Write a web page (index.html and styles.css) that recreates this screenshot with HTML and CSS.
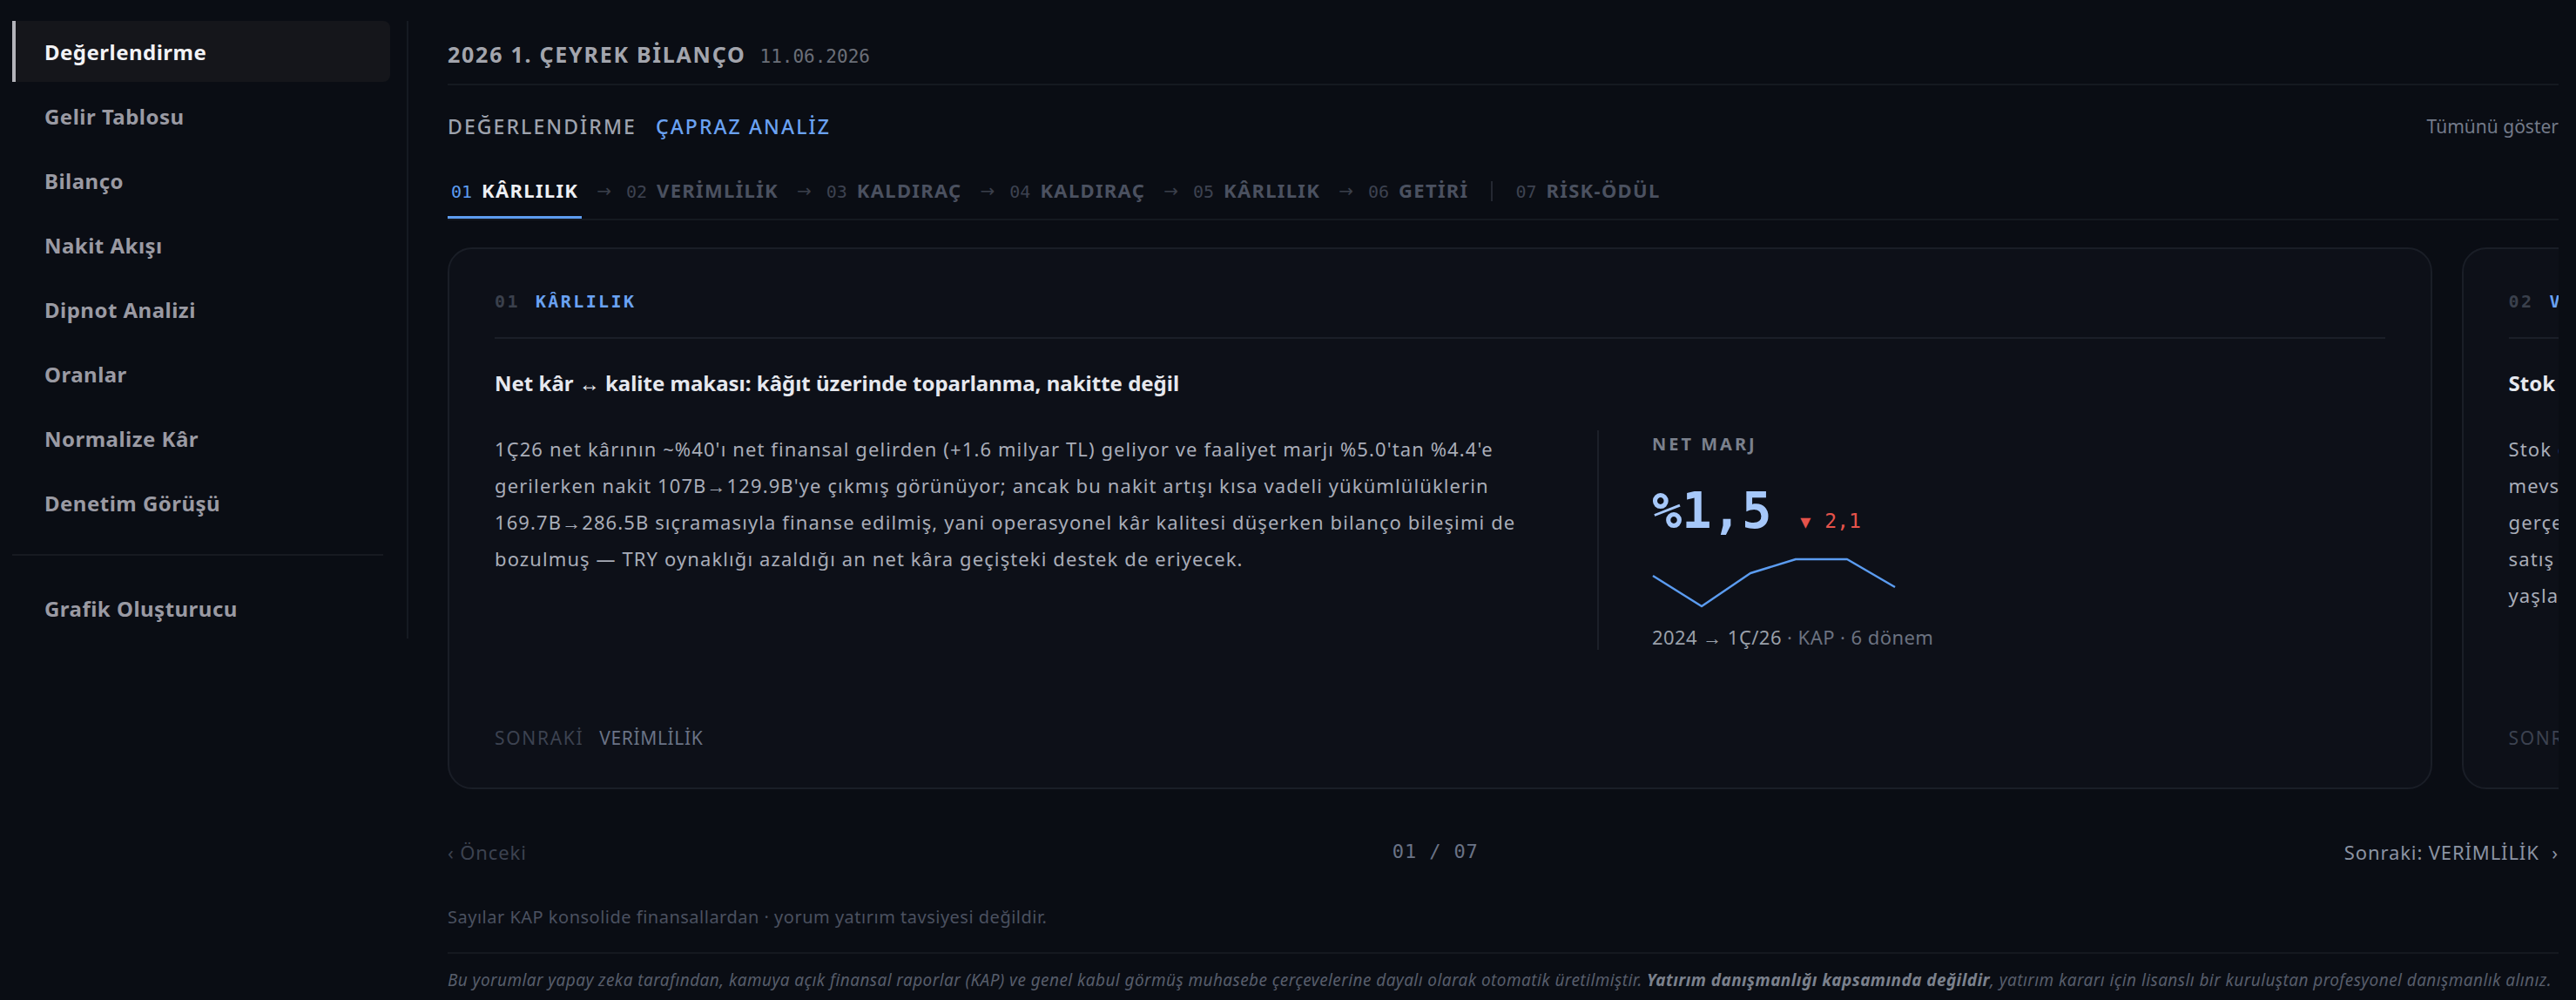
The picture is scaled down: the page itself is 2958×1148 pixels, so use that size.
FILE: index.html
```html
<!DOCTYPE html>
<html lang="tr">
<head>
    <meta charset="UTF-8">
    <meta name="viewport" content="width=device-width, initial-scale=1.0">
    <title>2026 1. Çeyrek Bilanço - Değerlendirme</title>
    <link rel="stylesheet" href="styles.css">
</head>
<body>
    <aside class="sidebar">
        <nav class="side-nav">
            <a class="side-link active" href="#">Değerlendirme</a>
            <a class="side-link" href="#">Gelir Tablosu</a>
            <a class="side-link" href="#">Bilanço</a>
            <a class="side-link" href="#">Nakit Akışı</a>
            <a class="side-link" href="#">Dipnot Analizi</a>
            <a class="side-link" href="#">Oranlar</a>
            <a class="side-link" href="#">Normalize Kâr</a>
            <a class="side-link" href="#">Denetim Görüşü</a>
        </nav>
        <div class="side-divider"></div>
        <a class="side-link" href="#">Grafik Oluşturucu</a>
    </aside>

    <main class="main">
        <header class="report-head">
            <h1>2026 1. ÇEYREK BİLANÇO</h1>
            <span class="report-date">11.06.2026</span>
        </header>

        <div class="section-bar">
            <div class="section-links">
                <a href="#">DEĞERLENDİRME</a>
                <a href="#" class="current">ÇAPRAZ ANALİZ</a>
            </div>
            <a href="#" class="show-all">Tümünü göster</a>
        </div>

        <nav class="steps">
            <a class="step active" href="#"><span class="step-no">01</span>KÂRLILIK</a>
            <span class="step-arrow">→</span>
            <a class="step" href="#"><span class="step-no">02</span>VERİMLİLİK</a>
            <span class="step-arrow">→</span>
            <a class="step" href="#"><span class="step-no">03</span>KALDIRAÇ</a>
            <span class="step-arrow">→</span>
            <a class="step" href="#"><span class="step-no">04</span>KALDIRAÇ</a>
            <span class="step-arrow">→</span>
            <a class="step" href="#"><span class="step-no">05</span>KÂRLILIK</a>
            <span class="step-arrow">→</span>
            <a class="step" href="#"><span class="step-no">06</span>GETİRİ</a>
            <span class="step-sep"></span>
            <a class="step" href="#"><span class="step-no">07</span>RİSK-ÖDÜL</a>
        </nav>

        <div class="cards">
            <article class="card">
                <div class="card-head">
                    <span class="card-no">01</span>
                    <span class="card-topic">KÂRLILIK</span>
                </div>
                <h2 class="card-title">Net kâr ↔ kalite makası: kâğıt üzerinde toparlanma, nakitte değil</h2>
                <div class="card-body">
                    <p class="card-text">1Ç26 net kârının ~%40'ı net finansal gelirden (+1.6 milyar TL) geliyor ve faaliyet marjı %5.0'tan %4.4'e gerilerken nakit 107B→129.9B'ye çıkmış görünüyor; ancak bu nakit artışı kısa vadeli yükümlülüklerin 169.7B→286.5B sıçramasıyla finanse edilmiş, yani operasyonel kâr kalitesi düşerken bilanço bileşimi de bozulmuş — TRY oynaklığı azaldığı an net kâra geçişteki destek de eriyecek.</p>
                    <div class="metric">
                        <div class="metric-label">NET MARJ</div>
                        <div class="metric-value">
                            <span class="metric-big">%1,5</span>
                            <span class="metric-delta down"><span class="tri">▼</span>2,1</span>
                        </div>
                        <svg class="spark" width="282" height="60" viewBox="0 0 282 60">
                            <polyline points="1,22 57,57 113,19 165,3 224,3 279,35" fill="none" stroke="#5b9cf0" stroke-width="2.5" stroke-linejoin="round"/>
                        </svg>
                        <div class="metric-src"><span class="range">2024 → 1Ç/26</span> · KAP · 6 dönem</div>
                    </div>
                </div>
                <div class="card-foot">
                    <span class="foot-label">SONRAKİ</span>
                    <span class="foot-next">VERİMLİLİK</span>
                </div>
            </article>

            <article class="card">
                <div class="card-head">
                    <span class="card-no">02</span>
                    <span class="card-topic">VERİMLİLİK</span>
                </div>
                <h2 class="card-title">Stok şişkinliği ↔ devir hızı: satılamayan mal bilançoda birikiyor</h2>
                <div class="card-body">
                    <p class="card-text">Stok devir süresi 1Ç26'da 96 günden 131 güne uzadı; bunun bir kısmı bayram öncesi geçici alımlarla mevsimsel hazırlıkla açıklanabilir, ancak stok artışı (+%38) satış artışının (+%9) çok üzerinde ve gerçekleşen brüt marj da %31.2'den %28.7'ye gerilemiş. Ticari alacak devir süresi de hızla uzarken bu veri, satış hacmini korumak için vadeyi ve iskontoyu birlikte artırdığını düşündürüyor; stok ve alacakların yaşlandırma tabloları bir sonraki dönem dipnotlarında izlenmeli.</p>
                    <div class="metric">
                        <div class="metric-label">STOK DEVİR</div>
                        <div class="metric-value">
                            <span class="metric-big">131g</span>
                            <span class="metric-delta down"><span class="tri">▲</span>35</span>
                        </div>
                        <svg class="spark" width="282" height="60" viewBox="0 0 282 60">
                            <polyline points="1,48 57,44 113,40 165,33 224,25 279,5" fill="none" stroke="#5b9cf0" stroke-width="2.5" stroke-linejoin="round"/>
                        </svg>
                        <div class="metric-src"><span class="range">2024 → 1Ç/26</span> · KAP · 6 dönem</div>
                    </div>
                </div>
                <div class="card-foot">
                    <span class="foot-label">SONRAKİ</span>
                    <span class="foot-next">KALDIRAÇ</span>
                </div>
            </article>
        </div>

        <div class="pager">
            <a href="#" class="pager-prev">‹ Önceki</a>
            <span class="pager-count">01 / 07</span>
            <a href="#" class="pager-next">Sonraki: VERİMLİLİK <span class="chev">›</span></a>
        </div>

        <p class="note">Sayılar KAP konsolide finansallardan · yorum yatırım tavsiyesi değildir.</p>

        <p class="disclaimer">Bu yorumlar yapay zeka tarafından, kamuya açık finansal raporlar (KAP) ve genel kabul görmüş muhasebe çerçevelerine dayalı olarak otomatik üretilmiştir. <strong>Yatırım danışmanlığı kapsamında değildir</strong>, yatırım kararı için lisanslı bir kuruluştan profesyonel danışmanlık alınız.</p>
    </main>
</body>
</html>
```

FILE: styles.css
```css
body {
    margin: 0;
    display: flex;
    align-items: flex-start;
    min-height: 100vh;
    overflow: hidden;
    background-color: #0a0d14;
    color: #a9adb8;
    font-family: "Noto Sans", sans-serif;
}
a {
    color: inherit;
    text-decoration: none;
}

/* sidebar */
.sidebar {
    flex: 0 0 auto;
    width: 434px;
    margin: 24px 0 0 14px;
    padding-right: 19px;
    border-right: 2px solid #161a22;
}
.side-nav {
    display: flex;
    flex-direction: column;
    gap: 4px;
}
.side-link {
    display: flex;
    align-items: center;
    height: 70px;
    padding-left: 33px;
    border-left: 4px solid transparent;
    border-radius: 0 8px 8px 0;
    font-size: 24px;
    font-weight: 700;
    letter-spacing: 0.02em;
    color: #9a9aa3;
}
.side-link.active {
    background-color: #15161b;
    border-left-color: #b3b3ba;
    color: #f2f2f5;
}
.side-divider {
    height: 2px;
    margin: 24px 8px 25px 0;
    background-color: #171a21;
}

/* main column */
.main {
    flex: 1;
    min-width: 0;
    padding: 0 20px 0 45px;
}
.report-head {
    display: flex;
    align-items: baseline;
    gap: 16px;
    padding: 46px 0 18px;
    border-bottom: 2px solid #151920;
}
.report-head h1 {
    margin: 0;
    font-size: 25px;
    line-height: 32px;
    font-weight: 700;
    letter-spacing: 0.07em;
    color: #a3a5ad;
}
.report-date {
    font-family: "DejaVu Sans Mono", monospace;
    font-size: 21px;
    color: #6b6f78;
}
.section-bar {
    display: flex;
    justify-content: space-between;
    align-items: center;
    margin-top: 32px;
    line-height: 30px;
}
.section-links {
    display: flex;
    gap: 22px;
    font-size: 23px;
    font-weight: 500;
    letter-spacing: 0.09em;
    color: #9ea3ae;
}
.section-links .current {
    color: #6aa2f2;
}
.show-all {
    font-size: 21px;
    color: #737a89;
}

/* step tabs */
.steps {
    display: flex;
    align-items: center;
    margin-top: 43px;
    border-bottom: 2px solid #151920;
}
.step {
    padding: 0 4px 13px;
    border-bottom: 3px solid transparent;
    font-size: 22px;
    line-height: 30px;
    font-weight: 700;
    letter-spacing: 0.06em;
    color: #4b5160;
}
.step-no {
    margin-right: 11px;
    font-family: "DejaVu Sans Mono", monospace;
    font-size: 20px;
    font-weight: 400;
    letter-spacing: 0;
    color: #3d4250;
}
.step.active {
    border-bottom-color: #5d9cf0;
    color: #eef0f4;
}
.step.active .step-no {
    color: #5d9cf0;
}
.step-arrow {
    margin: 0 13px 16px 17px;
    font-family: "DejaVu Sans", sans-serif;
    font-size: 20px;
    color: #3a3f4b;
}
.step-sep {
    width: 2px;
    height: 23px;
    margin: 0 22px 16px;
    background-color: #242832;
}

/* cards */
.cards {
    display: flex;
    gap: 34px;
    margin-top: 31px;
    overflow: hidden;
}
.card {
    flex: 0 0 94%;
    box-sizing: border-box;
    display: flex;
    flex-direction: column;
    height: 622px;
    padding: 46px 52px 43px;
    border: 2px solid #1a1e27;
    border-radius: 28px;
    background-color: #0d1018;
}
.card-head {
    display: flex;
    gap: 18px;
    padding-bottom: 27px;
    border-bottom: 2px solid #1b1f28;
    font-family: "DejaVu Sans Mono", monospace;
    font-size: 20px;
    line-height: 28px;
    font-weight: 700;
    letter-spacing: 0.12em;
}
.card-no {
    color: #3a404c;
}
.card-topic {
    color: #6aa2f2;
}
.card-title {
    margin: 35px 0 0;
    font-size: 24px;
    line-height: 32px;
    font-weight: 700;
    color: #e6e8ee;
}
.card-body {
    display: grid;
    grid-template-columns: 4fr 3fr;
    gap: 60px;
    margin-top: 38px;
}
.card-text {
    margin: 0;
    font-size: 22px;
    line-height: 42px;
    letter-spacing: 0.05em;
    color: #a9adb8;
}
.metric {
    padding-left: 61px;
    border-left: 2px solid #1c2029;
}
.metric-label {
    font-size: 20px;
    line-height: 32px;
    font-weight: 700;
    letter-spacing: 0.15em;
    color: #7b818d;
}
.metric-value {
    display: flex;
    align-items: baseline;
    gap: 33px;
    margin-top: 31px;
}
.metric-big {
    font-family: "DejaVu Sans Mono", monospace;
    font-size: 57px;
    line-height: 58px;
    font-weight: 700;
    color: #a6c8fa;
}
.metric-delta {
    font-family: "DejaVu Sans Mono", monospace;
    font-size: 23px;
    font-weight: 500;
}
.metric-delta.down {
    color: #e5534b;
}
.tri {
    margin-right: 16px;
    font-size: 20px;
}
.spark {
    display: block;
    margin-top: 24px;
}
.metric-src {
    margin-top: 17px;
    font-size: 22px;
    line-height: 30px;
    letter-spacing: 0.02em;
    color: #6b7280;
}
.metric-src .range {
    color: #9aa0aa;
}
.card-foot {
    display: flex;
    gap: 18px;
    margin-top: auto;
    font-size: 21px;
    line-height: 28px;
}
.foot-label {
    letter-spacing: 0.08em;
    color: #3c4250;
}
.foot-next {
    letter-spacing: 0.03em;
    color: #6a7386;
}

/* pager + footer notes */
.pager {
    display: flex;
    justify-content: space-between;
    align-items: center;
    margin-top: 57px;
    font-size: 22px;
    line-height: 30px;
    letter-spacing: 0.04em;
}
.pager-prev {
    color: #3c4250;
}
.pager-count {
    font-family: "DejaVu Sans Mono", monospace;
    font-size: 22px;
    letter-spacing: 0.04em;
    color: #6a7386;
}
.pager-next {
    color: #8b93a3;
}
.chev {
    margin-left: 8px;
}
.note {
    margin: 46px 0 0;
    padding-bottom: 26px;
    border-bottom: 2px solid #151920;
    font-size: 20px;
    line-height: 28px;
    letter-spacing: 0.025em;
    color: #4b5160;
}
.disclaimer {
    margin: 16px 0 0;
    font-size: 19px;
    line-height: 28px;
    letter-spacing: 0.022em;
    font-style: italic;
    color: #575d6b;
}
.disclaimer strong {
    color: #7b818d;
}
```
